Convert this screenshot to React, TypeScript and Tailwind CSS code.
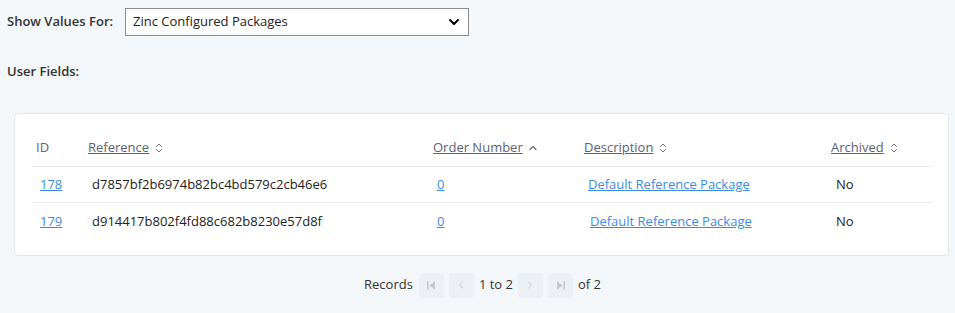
import { ChevronDown, ChevronLeft, ChevronRight, ChevronUp, ChevronsUpDown } from "lucide-react";

const rows = [
  { id: "178", ref: "d7857bf2b6974b82bc4bd579c2cb46e6", order: "0", desc: "Default Reference Package", descPad: "pl-2", archived: "No" },
  { id: "179", ref: "d914417b802f4fd88c682b8230e57d8f", order: "0", desc: "Default Reference Package", descPad: "pl-[10px]", archived: "No" },
];

function SortIcon({ dir }: { dir?: "asc" }) {
  if (dir === "asc") return <ChevronUp className="ml-1 inline h-3 w-3 text-[#6b7280]" strokeWidth={2.5} />;
  return <ChevronsUpDown className="ml-1 inline h-3 w-3 text-[#6b7280]" strokeWidth={2} />;
}

function PageButton({ children }: { children: React.ReactNode }) {
  return (
    <button type="button" className="flex h-[25px] w-[25px] items-center justify-center rounded bg-[#eceff3] text-[#c4c9d1]">
      {children}
    </button>
  );
}

export default function App() {
  return (
    <div className="min-h-screen bg-[#f4f7fa] text-[13px] text-[#222] font-['Open_Sans',sans-serif]">
      <div className="px-[7px] pt-2">
        <div className="flex items-center">
          <div className="w-[118px] font-semibold text-[#333]">Show Values For:</div>
          <div className="flex h-[28px] w-[344px] items-center justify-between border border-[#8c8c8c] bg-white pl-[7px] pr-[6px]">
            <span>Zinc Configured Packages</span>
            <ChevronDown className="h-4 w-4 text-black" strokeWidth={3} />
          </div>
        </div>
        <div className="mt-[26px] font-semibold text-[#333]">User Fields:</div>
      </div>

      <div className="ml-[14px] mr-[6px] mt-[31px] rounded border border-[#e3e7ec] bg-white pl-[17px] pr-[16px] pb-[15px] pt-[24px]">
        <table className="w-full table-fixed border-collapse">
          <colgroup>
            <col className="w-[52px]" />
            <col className="w-[345px]" />
            <col className="w-[151px]" />
            <col className="w-[247px]" />
            <col />
          </colgroup>
          <thead>
            <tr className="border-b border-[#e6e8eb] text-left text-[#5b6372]">
              <th className="h-[29px] pl-1 align-top font-normal">ID</th>
              <th className="pl-1 align-top font-normal"><span className="underline">Reference</span><SortIcon /></th>
              <th className="pl-1 align-top font-normal"><span className="underline">Order Number</span><SortIcon dir="asc" /></th>
              <th className="pl-1 align-top font-normal"><span className="underline">Description</span><SortIcon /></th>
              <th className="pl-1 align-top font-normal"><span className="underline">Archived</span><SortIcon /></th>
            </tr>
          </thead>
          <tbody>
            {rows.map((r, i) => (
              <tr key={r.id} className={i === 0 ? "h-[36px] border-b border-[#e6e8eb]" : "h-[37px]"}>
                <td className="pl-2"><a href="#" className="text-[#3d8be6] underline">{r.id}</a></td>
                <td className="pl-2">{r.ref}</td>
                <td className="pl-2"><a href="#" className="text-[#3d8be6] underline">{r.order}</a></td>
                <td className={r.descPad}><a href="#" className="text-[#3d8be6] underline">{r.desc}</a></td>
                <td className="pl-[9px]">{r.archived}</td>
              </tr>
            ))}
          </tbody>
        </table>
      </div>

      <div className="ml-[10px] mt-[17px] flex items-center justify-center gap-[5px] text-[#333]">
        <span className="mr-[1px]">Records</span>
        <PageButton>
          <svg width="9" height="9" viewBox="0 0 9 9" fill="currentColor"><rect x="0" y="0" width="1.6" height="9" /><path d="M8 0v9L2.5 4.5z" /></svg>
        </PageButton>
        <PageButton><ChevronLeft className="h-3 w-3" /></PageButton>
        <span>1 to 2</span>
        <PageButton><ChevronRight className="h-3 w-3" /></PageButton>
        <PageButton>
          <svg width="9" height="9" viewBox="0 0 9 9" fill="currentColor"><path d="M1 0v9l5.5-4.5z" /><rect x="7.4" y="0" width="1.6" height="9" /></svg>
        </PageButton>
        <span>of 2</span>
      </div>
    </div>
  );
}
